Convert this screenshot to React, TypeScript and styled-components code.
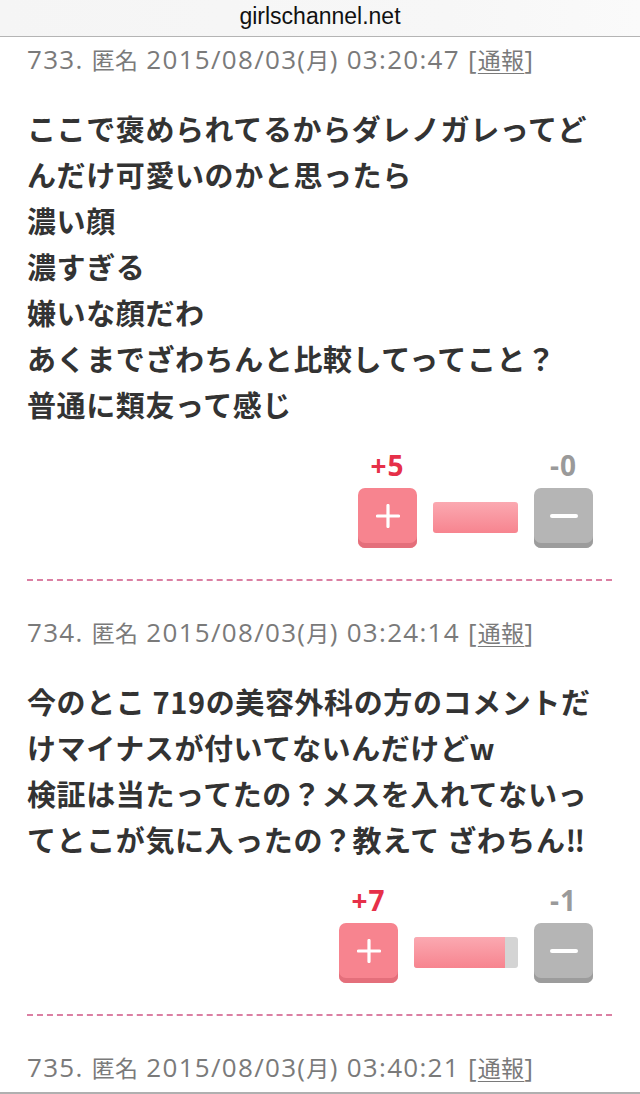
import React from "react"
import styled, { createGlobalStyle } from "styled-components"

const GlobalStyle = createGlobalStyle`
  html, body {
    margin: 0;
    padding: 0;
    background: #ffffff;
  }
  body {
    font-family: "Open Sans", "Noto Sans CJK JP", sans-serif;
  }
`

type Post = {
  no: number
  date: string
  day: string
  time: string
  lines: React.ReactNode[]
  plus: number
  minus: number
  barWidth: number
}

const posts: Post[] = [
  {
    no: 733,
    date: "2015/08/03",
    day: "月",
    time: "03:20:47",
    lines: [
      "ここで褒められてるからダレノガレってど",
      "んだけ可愛いのかと思ったら",
      "濃い顔",
      "濃すぎる",
      "嫌いな顔だわ",
      "あくまでざわちんと比較してってこと？",
      "普通に類友って感じ",
    ],
    plus: 5,
    minus: 0,
    barWidth: 85,
  },
  {
    no: 734,
    date: "2015/08/03",
    day: "月",
    time: "03:24:14",
    lines: [
      "今のとこ 719の美容外科の方のコメントだ",
      "けマイナスが付いてないんだけどw",
      "検証は当たってたの？メスを入れてないっ",
      "てとこが気に入ったの？教えて ざわちん‼",
    ],
    plus: 7,
    minus: 1,
    barWidth: 104,
  },
]

const MetaLine: React.FC<{ no: number; date: string; day: string; time: string }> = ({
  no,
  date,
  day,
  time,
}) => (
  <Meta>
    {no}. <Kanji>匿名</Kanji> {date}(<Kanji>{day}</Kanji>) {time} [
    <ReportLink>
      <Kanji>通報</Kanji>
    </ReportLink>
    ]
  </Meta>
)

const App: React.FC = () => {
  return (
    <>
      <GlobalStyle />
      <Page>
        <UrlBar>girlschannel.net</UrlBar>
        {posts.map(post => (
          <PostBlock key={post.no}>
            <MetaLine no={post.no} date={post.date} day={post.day} time={post.time} />
            <Body>
              {post.lines.map((line, i) => (
                <div key={i}>{line}</div>
              ))}
            </Body>
            <Votes>
              <VoteCol>
                <Count $plus>+{post.plus}</Count>
                <VoteButton $plus>
                  <svg width="24" height="24" viewBox="0 0 24 24">
                    <path
                      d="M12 1.5v21M1.5 12h21"
                      stroke="#fff"
                      strokeWidth="3.2"
                      strokeLinecap="round"
                    />
                  </svg>
                </VoteButton>
              </VoteCol>
              <Bar style={{ width: post.barWidth }}>
                <BarFill
                  style={{
                    width: `${(post.plus / (post.plus + post.minus)) * 100}%`,
                  }}
                />
              </Bar>
              <VoteCol>
                <Count>-{post.minus}</Count>
                <VoteButton>
                  <svg width="30" height="24" viewBox="0 0 30 24">
                    <path
                      d="M3 12h24"
                      stroke="#fff"
                      strokeWidth="4"
                      strokeLinecap="round"
                    />
                  </svg>
                </VoteButton>
              </VoteCol>
            </Votes>
            <Divider />
          </PostBlock>
        ))}
        <PostBlock>
          <MetaLine no={735} date="2015/08/03" day="月" time="03:40:21" />
        </PostBlock>
        <BottomBar />
      </Page>
    </>
  )
}

export default App

const Page = styled.div`
  width: 640px;
  height: 1094px;
  overflow: hidden;
  display: flex;
  flex-direction: column;
`

const UrlBar = styled.div`
  height: 37px;
  border-bottom: 1px solid #b4b4b4;
  background: linear-gradient(to right, #f5f5f5, #f7f7f7 70%, #fafafa);
  display: flex;
  align-items: center;
  justify-content: center;
  font-family: "Liberation Sans", Arial, sans-serif;
  font-size: 23px;
  color: #111;
  padding-bottom: 3px;
  box-sizing: border-box;
`

const PostBlock = styled.div`
  padding: 7px 28px 0 27px;
  display: flex;
  flex-direction: column;

  & + & {
    padding-top: 36px;
  }
`

const Meta = styled.div`
  font-family: "Open Sans", "Noto Sans CJK JP", sans-serif;
  font-size: 26px;
  letter-spacing: 1.3px;
  line-height: 30px;
  color: #7a7a7a;
  white-space: nowrap;
`

const Kanji = styled.span`
  font-family: "Noto Sans CJK JP", sans-serif;
  font-size: 23px;
  letter-spacing: 0.3px;
`

const ReportLink = styled.span`
  text-decoration: underline;
  text-underline-offset: 4px;
  text-decoration-thickness: 1px;
`

const Body = styled.div`
  margin-top: 31px;
  font-family: "Noto Sans CJK JP", sans-serif;
  font-weight: 700;
  font-size: 29px;
  line-height: 46px;
  color: #333;
  white-space: nowrap;
  letter-spacing: 0.6px;
`

const Votes = styled.div`
  margin-top: 23px;
  align-self: flex-end;
  margin-right: 19px;
  display: flex;
  align-items: flex-end;
  gap: 16px;
`

const VoteCol = styled.div`
  display: flex;
  flex-direction: column;
  align-items: center;
  gap: 8px;
`

const Count = styled.div<{ $plus?: boolean }>`
  font-family: "Open Sans", "Noto Sans", sans-serif;
  font-weight: 700;
  font-size: 28px;
  line-height: 30px;
  letter-spacing: 1px;
  color: ${p => (p.$plus ? "#e63049" : "#9a9a9a")};
`

const VoteButton = styled.div<{ $plus?: boolean }>`
  width: 59px;
  height: 60px;
  border-radius: 7px;
  box-sizing: border-box;
  padding-bottom: 4px;
  display: flex;
  align-items: center;
  justify-content: center;
  background: ${p => (p.$plus ? "#f7848f" : "#b5b5b5")};
  box-shadow: inset 0 -5px 0 ${p => (p.$plus ? "#e46f7b" : "#9c9c9c")};
`

const Bar = styled.div`
  height: 31px;
  margin-bottom: 15px;
  border-radius: 3px;
  background: #d4d4d4;
  overflow: hidden;
  display: flex;
`

const BarFill = styled.div`
  height: 100%;
  background: linear-gradient(to bottom, #fba9b1, #f7848f);
`

const Divider = styled.div`
  margin-top: 31px;
  height: 0;
  border-top: 2px dashed #db7fa3;
`

const BottomBar = styled.div`
  margin-top: auto;
  height: 2px;
  background: #b0b0b0;
`
